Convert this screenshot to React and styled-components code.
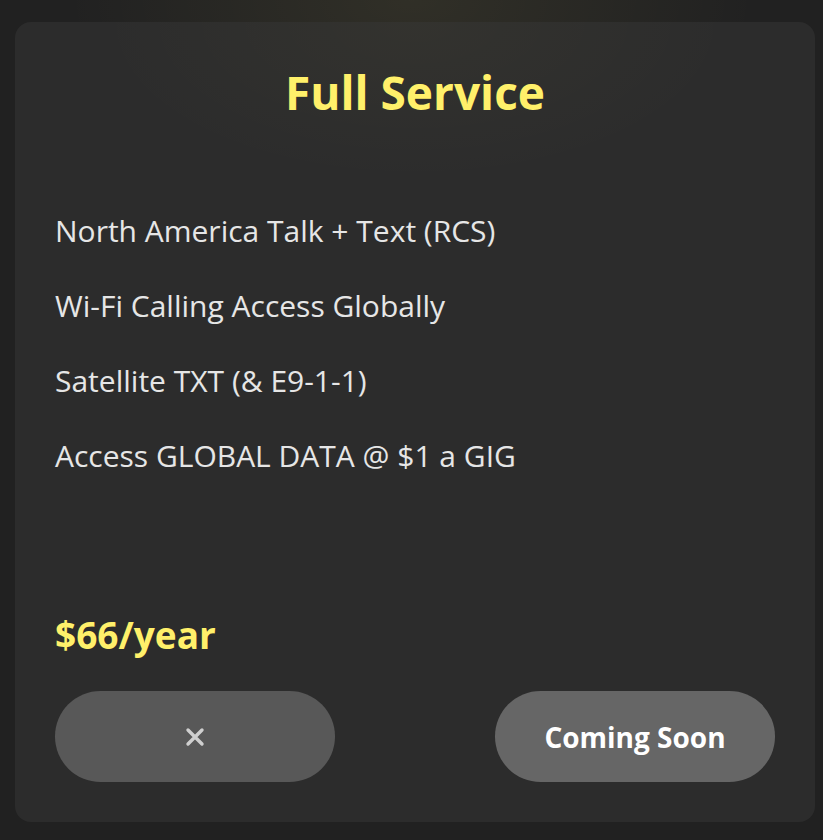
import React from 'react';
import styled, {createGlobalStyle} from 'styled-components';

const Global = createGlobalStyle`
  html, body {
    margin: 0;
    height: 100%;
  }
  body {
    background: radial-gradient(ellipse 60% 30% at 50% 0%, rgba(255, 236, 120, 0.07), transparent 70%), #212121;
    font-family: "Open Sans", "Noto Sans", sans-serif;
  }
`
const Page = styled.div`
  padding: 22px 8px 18px 15px;
`
const Card = styled.div`
  width: 800px;
  height: 800px;
  box-sizing: border-box;
  padding: 40px 40px 40px 40px;
  border-radius: 16px;
  background: radial-gradient(ellipse 50% 25% at 50% 0%, rgba(255, 236, 120, 0.035), transparent 80%), #2c2c2c;
  display: flex;
  flex-direction: column;
`
const Title = styled.h2`
  margin: 0;
  text-align: center;
  color: #fff06a;
  font-size: 46px;
  font-weight: 700;
  line-height: 60px;
`
const Features = styled.ul`
  list-style: none;
  margin: 89px 0 0;
  padding: 0;
  display: flex;
  flex-direction: column;
  gap: 35px;
`
const Feature = styled.li`
  color: #e6e6e6;
  font-size: 30px;
  line-height: 40px;
`
const Price = styled.div`
  margin-top: auto;
  color: #fff06a;
  font-size: 37px;
  font-weight: 700;
  line-height: 44px;
`
const Actions = styled.div`
  margin-top: 34px;
  display: flex;
  justify-content: space-between;
`
const Pill = styled.button`
  width: 280px;
  height: 91px;
  border: none;
  border-radius: 46px;
  background: ${p => p.$muted ? '#585858' : '#666666'};
  color: ${p => p.$muted ? '#cfcfcf' : '#ffffff'};
  font-family: inherit;
  font-size: 28px;
  font-weight: 700;
  display: flex;
  align-items: center;
  justify-content: center;
  cursor: pointer;
`

const features = [
  'North America Talk + Text (RCS)',
  'Wi-Fi Calling Access Globally',
  'Satellite TXT (& E9-1-1)',
  'Access GLOBAL DATA @ $1 a GIG',
];

const CloseIcon = () => (
  <svg width="20" height="20" viewBox="0 0 20 20">
    <path d="M3 3 L17 17 M17 3 L3 17" stroke="#cfcfcf" strokeWidth="3.4" strokeLinecap="round" />
  </svg>
);

let App = () => {
  return (
    <Page>
      <Global />
      <Card>
        <Title>Full Service</Title>
        <Features>
          {features.map(f => <Feature key={f}>{f}</Feature>)}
        </Features>
        <Price>$66/year</Price>
        <Actions>
          <Pill $muted aria-label="Close"><CloseIcon /></Pill>
          <Pill>Coming Soon</Pill>
        </Actions>
      </Card>
    </Page>
  )
}

export default App;
